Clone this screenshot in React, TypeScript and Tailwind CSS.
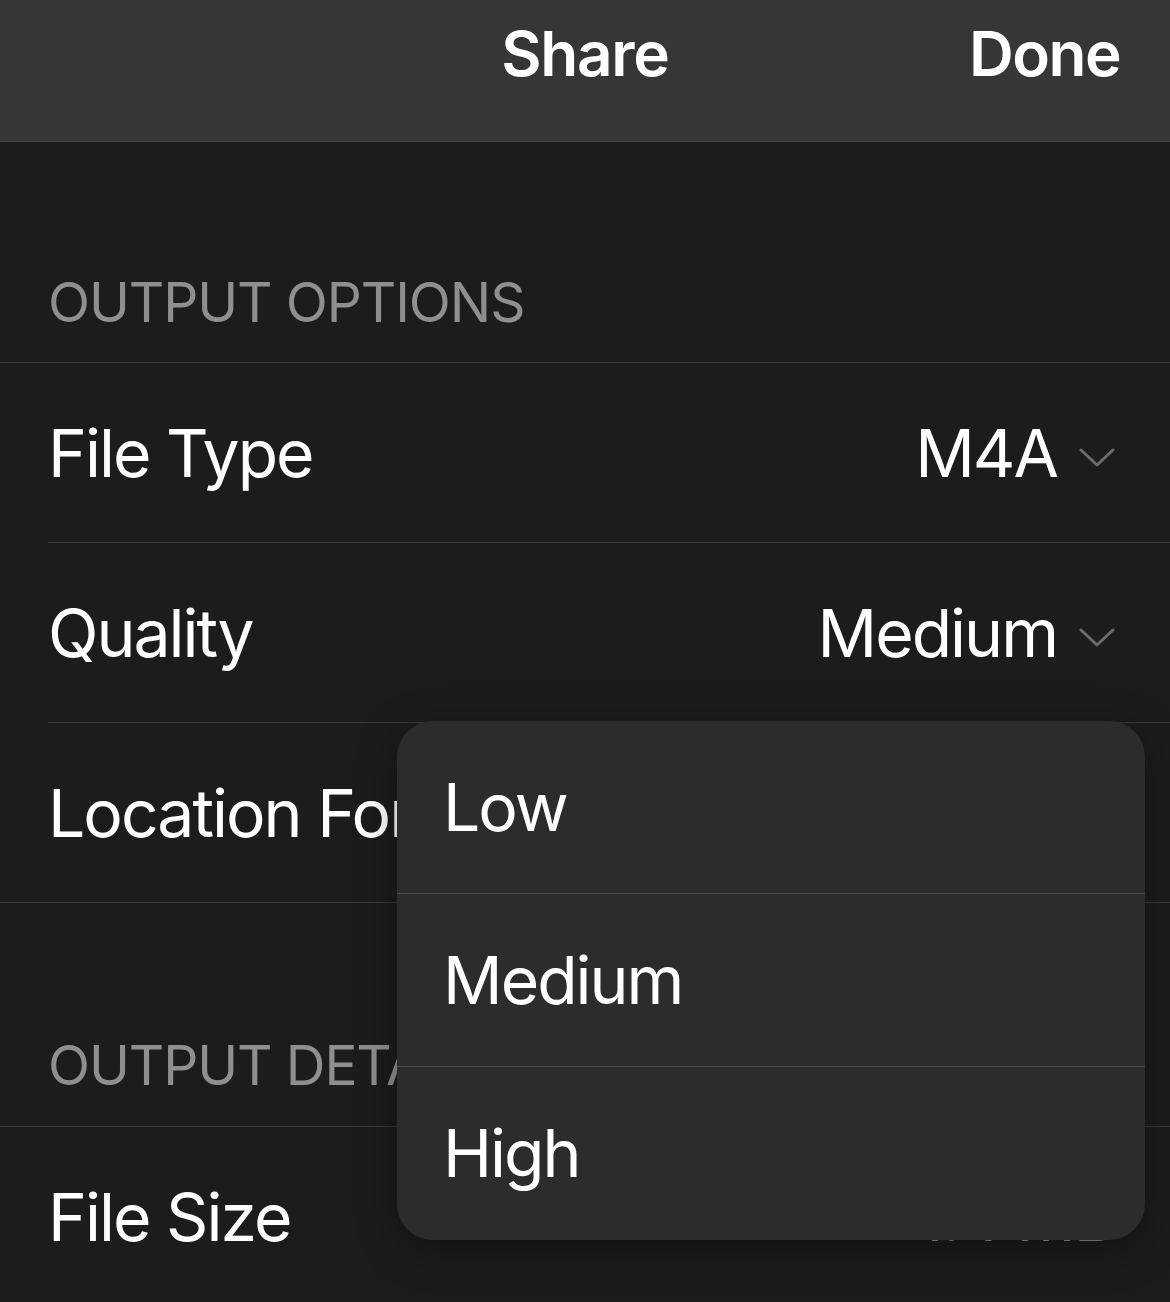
import React from "react";

const font = { fontFamily: "Inter, 'Liberation Sans', sans-serif" };

function Chevron() {
  return (
    <svg width="36" height="22" viewBox="0 0 36 22" className="ml-[22px] mt-[10px]">
      <path d="M2 3 L18 18 L34 3" fill="none" stroke="#6b6b70" strokeWidth="3" strokeLinecap="round" strokeLinejoin="round" />
    </svg>
  );
}

function Row({ label, value, chevron, border = true, full = false }: { label: string; value?: string; chevron?: boolean; border?: boolean; full?: boolean }) {
  return (
    <div className="relative h-[180px] flex items-center pl-[48px] pr-[55px]">
      <span className="text-[66px] text-white tracking-[-0.03em]">{label}</span>
      <div className="ml-auto flex items-center">
        {value && <span className={`text-[66px] tracking-[-0.03em] ${chevron ? "text-white" : "text-[#8e8e93]"}`}>{value}</span>}
        {chevron && <Chevron />}
      </div>
      {border && <div className={`absolute bottom-0 right-0 h-px bg-[#3a3a3c] ${full ? "left-0" : "left-[48px]"}`} />}
    </div>
  );
}

export default function App() {
  return (
    <div className="w-[1170px] h-[1302px] overflow-hidden bg-[#1c1c1e] relative" style={font}>
      <div className="h-[142px] bg-[#363636] border-b border-[#444446] flex items-start justify-center relative pt-[7px]">
        <span className="text-[62px] font-semibold text-white tracking-[-0.02em]">Share</span>
        <span className="absolute right-[50px] top-[7px] text-[62px] font-semibold text-white tracking-[-0.025em]">Done</span>
      </div>
      <div className="h-[220px] flex items-end pl-[48px] pb-[19px]">
        <span className="text-[55px] text-[#8e8e93] tracking-[-0.02em]">OUTPUT OPTIONS</span>
      </div>
      <div className="border-t border-[#3a3a3c]">
        <Row label="File Type" value="M4A" chevron />
        <Row label="Quality" value="Medium" chevron />
        <Row label="Location For Recording" value="" full />
      </div>
      <div className="h-[223px] flex items-end pl-[48px] pb-[20px]">
        <span className="text-[55px] text-[#8e8e93] tracking-[-0.02em]">OUTPUT DETAILS</span>
      </div>
      <div className="border-t border-[#3a3a3c]">
        <Row label="File Size" value="1.4 MB" border={false} />
      </div>

      <div className="absolute left-[397px] top-[721px] w-[748px] rounded-[36px] bg-[#2c2c2e] shadow-[0_10px_40px_rgba(0,0,0,0.35)] overflow-hidden">
        {["Low", "Medium", "High"].map((t, i) => (
          <div key={t} className={`h-[173px] flex items-center pl-[46px] ${i < 2 ? "border-b border-[#48484a]" : ""}`}>
            <span className="text-[66px] text-white tracking-[-0.03em]">{t}</span>
          </div>
        ))}
      </div>
    </div>
  );
}
